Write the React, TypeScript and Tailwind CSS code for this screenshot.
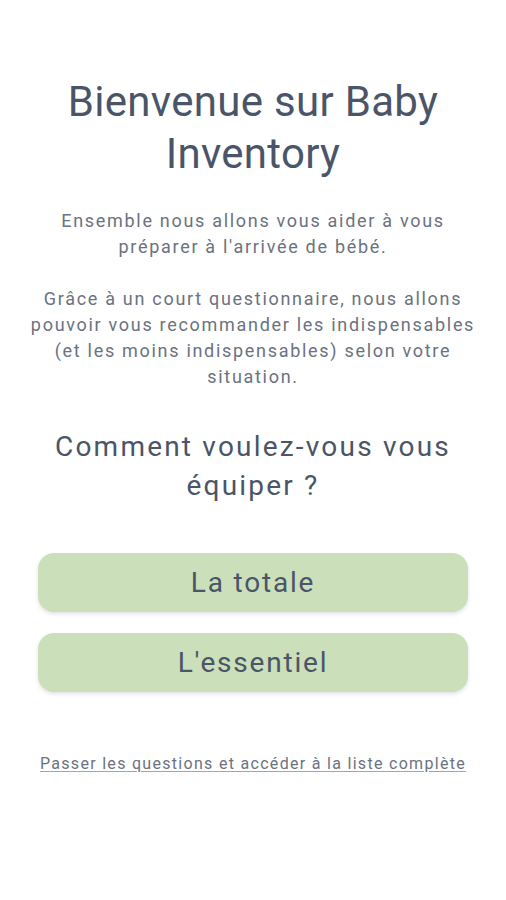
const font = { fontFamily: "Roboto, 'Noto Sans', sans-serif" };

function ChoiceButton({ label }: { label: string }) {
  return (
    <button
      type="button"
      className="flex h-[59px] w-full items-center justify-center rounded-2xl bg-[#cbdfbb] text-[28px] tracking-[1.8px] text-[#4a5568] shadow-[0_2px_4px_rgba(0,0,0,0.12)]"
    >
      {label}
    </button>
  );
}

export default function App() {
  return (
    <div className="min-h-[900px] w-full bg-white" style={font}>
      <main className="flex flex-col items-center px-[24px] pt-[76px] text-center">
        <h1 className="text-[42px] leading-[52px] tracking-[0.3px] text-[#4a5568]">
          Bienvenue sur Baby
          <br />
          Inventory
        </h1>

        <div className="mt-[28px] text-[18px] leading-[26px] tracking-[1.7px] text-[#6b7280]">
          <p>
            Ensemble nous allons vous aider à vous
            <br />
            préparer à l'arrivée de bébé.
          </p>
          <p className="mt-[26px]">
            Grâce à un court questionnaire, nous allons
            <br />
            pouvoir vous recommander les indispensables
            <br />
            (et les moins indispensables) selon votre
            <br />
            situation.
          </p>
        </div>

        <h2 className="mt-[37px] text-[28px] leading-[39px] tracking-[2.2px] text-[#4a5568]">
          Comment voulez-vous vous
          <br />
          équiper ?
        </h2>

        <div className="mt-[48px] flex w-full flex-col gap-[21px] px-[14px]">
          <ChoiceButton label="La totale" />
          <ChoiceButton label="L'essentiel" />
        </div>

        <a
          href="#"
          className="mt-[60px] text-[16px] tracking-[1.3px] text-[#6b7280] underline decoration-[#a0a6b0] underline-offset-2"
        >
          Passer les questions et accéder à la liste complète
        </a>
      </main>
    </div>
  );
}
